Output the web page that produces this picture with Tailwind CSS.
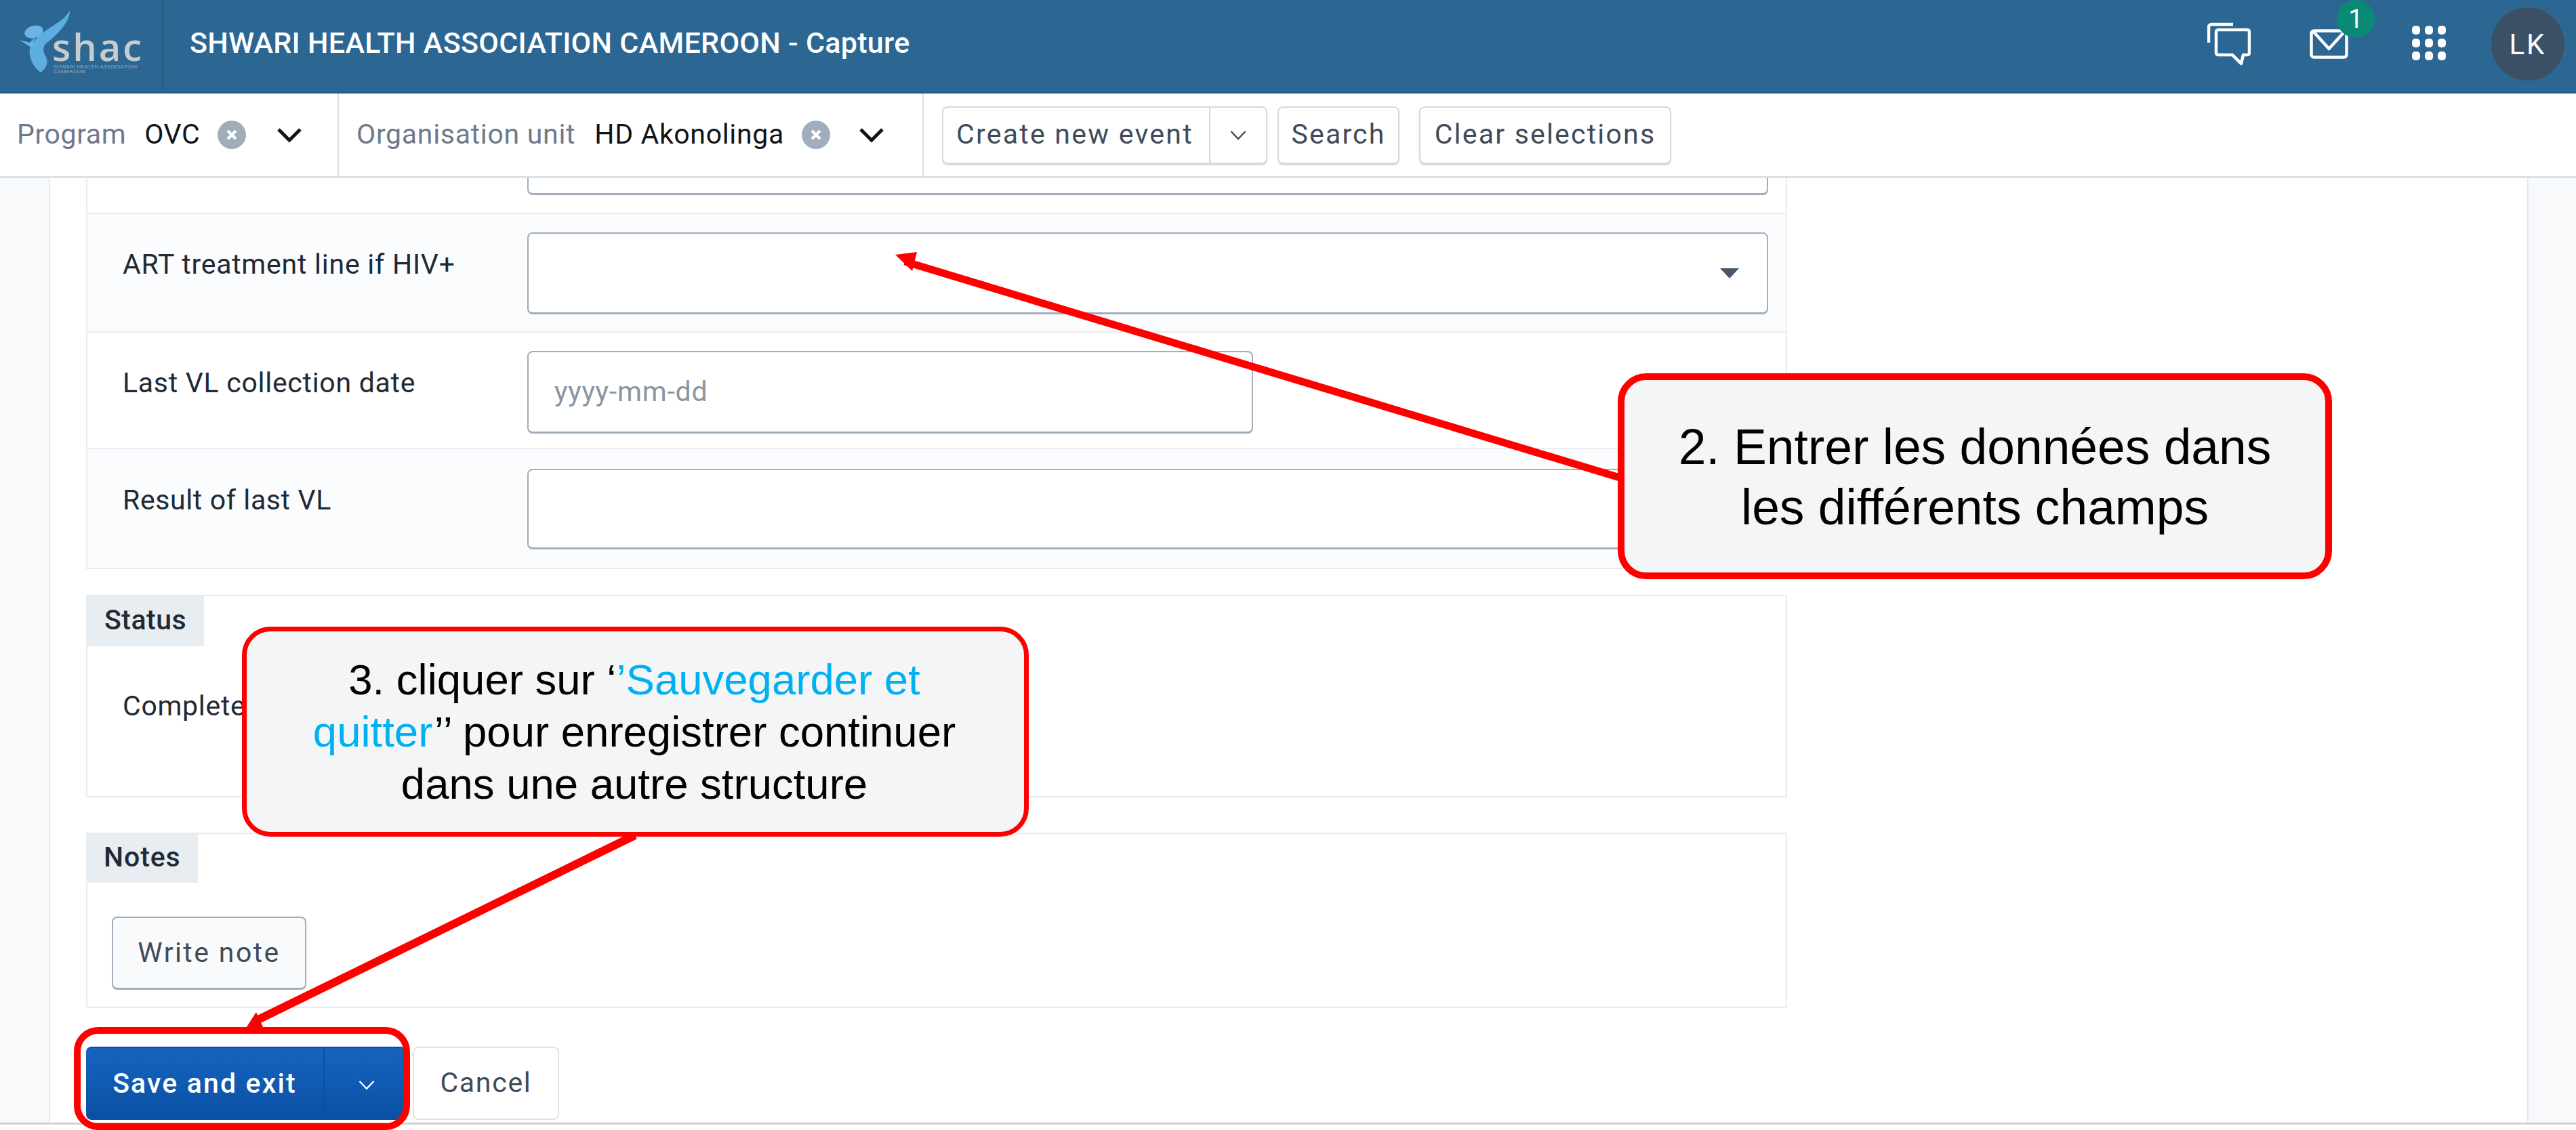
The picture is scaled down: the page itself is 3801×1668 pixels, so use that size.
<!DOCTYPE html>
<html lang="en">

<head>
    <meta charset="UTF-8">
    <meta name="viewport" content="width=device-width, initial-scale=1.0">
    <title>Capture</title>
    <script src="https://cdn.jsdelivr.net/npm/@tailwindcss/browser@4"></script>
</head>

<body>
    <div class="relative w-[3801px] h-[1668px] overflow-hidden bg-white font-[Roboto,sans-serif] text-[41px] text-[#212934]">
        <!-- Header -->
        <header class="flex items-center h-[138px] bg-[#2c6693] border-b-2 border-[#24598a] text-white">
            <div class="relative w-[241px] h-full border-r-2 border-[#285c86] shrink-0">
                <svg class="absolute left-0 top-0" width="110" height="136" viewBox="0 0 110 136">
                    <path d="M103 15C104 32 84 52 68 64C62 70 64 78 68 84C72 92 68 102 60 107C48 98 42 84 44 72C46 62 60 50 72 42C86 33 98 26 103 15Z" fill="#5cade0"/>
                    <ellipse cx="50" cy="47" rx="14" ry="9" transform="rotate(-15 50 47)" fill="#68b5e6"/>
                    <path d="M29 59L44 63L52 54L46 70Z" fill="#68b5e6"/>
                </svg>
                <span class="absolute left-[77px] top-[45px] font-['Open_Sans',sans-serif] font-semibold text-[#c8cccf] text-[56px] tracking-[3px] leading-[46px]">shac</span>
                <span class="absolute left-[79px] top-[95px] text-[8px] leading-[7px] tracking-[0.4px] text-[#8ea8bd] whitespace-nowrap">SHWARI HEALTH ASSOCIATION<br>CAMEROON</span>
            </div>
            <div class="ml-[39px] pb-[10px] font-medium text-[43px] tracking-[0.3px]">SHWARI HEALTH ASSOCIATION CAMEROON - Capture</div>
            <div class="ml-auto flex items-center pr-[17px] pb-[6px]">
                <svg width="64" height="64" viewBox="0 0 64 64" fill="none" stroke="white" stroke-width="4.5" stroke-linejoin="round">
                    <path d="M2 30V7a4 4 0 0 1 4-4h32"/>
                    <path d="M13 14a3 3 0 0 1 3-3h43a3 3 0 0 1 3 3v31a3 3 0 0 1-3 3h-6l-3 13-13-13H16a3 3 0 0 1-3-3Z"/>
                </svg>
                <div class="relative ml-[87px] w-[57px] h-[44px]">
                    <svg width="57" height="44" viewBox="0 0 57 44" fill="none" stroke="white" stroke-width="4.5" stroke-linejoin="round">
                        <rect x="2.5" y="2.5" width="52" height="39" rx="4"/>
                        <path d="M5 3L28.5 29L52 3"/>
                    </svg>
                    <span class="absolute left-[40px] top-[-43px] flex items-center justify-center w-[56px] h-[56px] rounded-full bg-[#0a8a74] text-[38px]">1</span>
                </div>
                <div class="ml-[94px] mb-[4px] grid grid-cols-3 gap-x-[7px] gap-y-[6px]">
                    <i class="block w-[12px] h-[13px] rounded-[5px] bg-white"></i><i class="block w-[12px] h-[13px] rounded-[5px] bg-white"></i><i class="block w-[12px] h-[13px] rounded-[5px] bg-white"></i>
                    <i class="block w-[12px] h-[13px] rounded-[5px] bg-white"></i><i class="block w-[12px] h-[13px] rounded-[5px] bg-white"></i><i class="block w-[12px] h-[13px] rounded-[5px] bg-white"></i>
                    <i class="block w-[12px] h-[13px] rounded-[5px] bg-white"></i><i class="block w-[12px] h-[13px] rounded-[5px] bg-white"></i><i class="block w-[12px] h-[13px] rounded-[5px] bg-white"></i>
                </div>
                <div class="ml-[67px] flex items-center justify-center w-[108px] h-[108px] rounded-full bg-[#3d5166] text-[42px] tracking-[3px]">LK</div>
            </div>
        </header>

        <!-- Toolbar -->
        <div class="flex items-center h-[125px] border-b-[3px] border-[#d9e1e9]">
            <div class="flex items-center w-[500px] h-full pl-[25px] border-r-2 border-[#d5dde5] shrink-0">
                <span class="text-[#6e7a8a] tracking-[0.6px]">Program</span>
                <span class="ml-[27px] text-[#101418] tracking-[0.5px]">OVC</span>
                <svg class="ml-[26px]" width="42" height="42" viewBox="0 0 42 42"><circle cx="21" cy="21" r="21" fill="#a0adba"/><path d="M15 15L27 27M27 15L15 27" stroke="white" stroke-width="4"/></svg>
                <svg class="ml-[46px]" width="36" height="22" viewBox="0 0 36 22" fill="none" stroke="#101418" stroke-width="5"><path d="M2 3L18 19L34 3"/></svg>
            </div>
            <div class="flex items-center w-[863px] h-full pl-[26px] border-r-2 border-[#d5dde5] shrink-0">
                <span class="text-[#6e7a8a] tracking-[0.7px]">Organisation unit</span>
                <span class="ml-[28px] text-[#101418] tracking-[0.65px]">HD Akonolinga</span>
                <svg class="ml-[26px]" width="42" height="42" viewBox="0 0 42 42"><circle cx="21" cy="21" r="21" fill="#a0adba"/><path d="M15 15L27 27M27 15L15 27" stroke="white" stroke-width="4"/></svg>
                <svg class="ml-[43px]" width="36" height="22" viewBox="0 0 36 22" fill="none" stroke="#101418" stroke-width="5"><path d="M2 3L18 19L34 3"/></svg>
            </div>
            <div class="flex items-center pl-[27px]">
                <div class="flex items-center h-[85px] w-[480px] rounded-[8px] border-2 border-[#d5d9e0] shadow-[0_2px_1px_#d5d9e0] text-[#404b5a]">
                    <span class="flex items-center w-[394px] h-full pl-[19px] border-r-2 border-[#d5d9e0] tracking-[2.25px]">Create new event</span>
                    <svg class="ml-[29px]" width="24" height="15" viewBox="0 0 24 15" fill="none" stroke="#404b5a" stroke-width="2.5"><path d="M1.5 2L12 13L22.5 2"/></svg>
                </div>
                <button class="ml-[15px] h-[85px] w-[180px] rounded-[8px] border-2 border-[#d5d9e0] shadow-[0_2px_1px_#d5d9e0] text-[#404b5a] tracking-[2.2px]">Search</button>
                <button class="ml-[29px] h-[85px] w-[372px] rounded-[8px] border-2 border-[#d5d9e0] shadow-[0_2px_1px_#d5d9e0] text-[#404b5a] tracking-[2.2px]">Clear selections</button>
            </div>
        </div>

        <!-- Main -->
        <div class="flex h-[1397px] border-b-[3px] border-[#cdd4d0]">
            <div class="w-[74px] bg-[#f8f9fa] border-r-2 border-[#e3e8ee] shrink-0"></div>
            <main class="w-[3655px] pl-[53px] shrink-0">
                <section class="w-[2510px] border-x-2 border-b-2 border-[#e8ecf1]">
                    <div class="flex h-[53px] border-b-2 border-[#e8ecf1] pl-[649px] pr-[26px]">
                        <div class="w-full h-[25px] rounded-b-[8px] border-2 border-t-0 border-[#a0adba] border-b-[3px]"></div>
                    </div>
                    <div class="flex h-[175px] bg-[#fbfcfd] border-b-2 border-[#e8ecf1] pt-[27px] pl-[52px] pr-[26px]">
                        <label class="w-[597px] pt-[27px] leading-[40px] shrink-0 tracking-[0.75px]">ART treatment line if HIV+</label>
                        <div class="flex items-center justify-end w-full h-[121px] pr-[41px] rounded-[8px] bg-white border-2 border-[#a0adba] border-b-[3px]">
                            <svg width="28" height="15" viewBox="0 0 28 15"><path d="M0 0H28L14 15Z" fill="#4a5768"/></svg>
                        </div>
                    </div>
                    <div class="flex h-[172px] border-b-2 border-[#e8ecf1] pt-[27px] pl-[52px]">
                        <label class="w-[597px] pt-[27px] leading-[40px] shrink-0 tracking-[0.72px]">Last VL collection date</label>
                        <div class="flex items-center w-[1071px] h-[122px] pl-[38px] rounded-[8px] bg-white border-2 border-[#a0adba] border-b-[3px] text-[#8a95a3] tracking-[0.8px]">yyyy-mm-dd</div>
                    </div>
                    <div class="flex h-[175px] bg-[#fbfcfd] pt-[29px] pl-[52px] pr-[26px]">
                        <label class="w-[597px] pt-[26px] leading-[40px] shrink-0 tracking-[0.62px]">Result of last VL</label>
                        <div class="w-full h-[119px] rounded-[8px] bg-white border-2 border-[#a0adba] border-b-[3px]"></div>
                    </div>
                </section>

                <section class="mt-[38px] w-[2510px] h-[299px] border-2 border-[#e8ecf1]">
                    <h3 class="flex items-center w-[174px] h-[76px] -mt-[2px] -ml-[2px] pl-[27px] bg-[#e8edf2] font-medium tracking-[0.5px]">Status</h3>
                    <div class="pl-[52px] pt-[68px] leading-[40px] tracking-[0.7px]">Complete</div>
                </section>

                <section class="mt-[52px] w-[2510px] h-[259px] border-2 border-[#e8ecf1]">
                    <h3 class="flex items-center w-[165px] h-[74px] -mt-[2px] -ml-[2px] pl-[26px] bg-[#e8edf2] font-medium tracking-[0.9px]">Notes</h3>
                    <button class="ml-[36px] mt-[50px] w-[287px] h-[108px] rounded-[8px] bg-[#f9fafb] border-2 border-[#a0adba] border-b-[3px] text-[#404b5a] tracking-[2.4px]">Write note</button>
                </section>

                <div class="flex mt-[57px]">
                    <div class="flex w-[471px] h-[108px] rounded-[8px] text-white bg-linear-to-b from-[#1565c0] to-[#0a4fa3] border-t-2 border-[#0b4aa0] font-medium">
                        <span class="flex items-center justify-center w-[352px] border-r-2 border-[#0d4f9e] tracking-[2.15px]">Save and exit</span>
                        <svg class="ml-[50px] mt-[47px]" width="24" height="15" viewBox="0 0 24 15" fill="none" stroke="white" stroke-width="2.5"><path d="M1.5 2L12 13L22.5 2"/></svg>
                    </div>
                    <button class="ml-[11px] w-[216px] h-[108px] rounded-[8px] border-2 border-[#dfe3e8] text-[#404b5a] tracking-[1.7px]">Cancel</button>
                </div>
            </main>
            <div class="flex-1 bg-[#f8f9fa] border-l-2 border-[#e3e8ee]"></div>
        </div>

        <!-- Annotations -->
        <svg class="absolute inset-0 pointer-events-none" width="3801" height="1668" viewBox="0 0 3801 1668">
            <path d="M2390 705L1335 386" stroke="#ff0000" stroke-width="11" fill="none"/>
            <path d="M1321 376L1353 372L1346 400Z" fill="#ff0000"/>
            <path d="M937 1233L375 1508" stroke="#ff0000" stroke-width="12" fill="none"/>
            <path d="M360 1522L378 1494L388 1516Z" fill="#ff0000"/>
        </svg>
        <div class="absolute left-[2387px] top-[551px] flex items-center justify-center w-[1054px] h-[304px] pt-[4px] rounded-[42px] border-[10px] border-[#ff0000] bg-[#f4f5f7] text-center font-['Liberation_Sans',sans-serif] text-[73.2px] leading-[89px] text-black">
            <span>2. Entrer les données dans<br>les différents champs</span>
        </div>
        <div class="absolute left-[357px] top-[925px] flex items-center justify-center w-[1161px] h-[310px] rounded-[42px] border-[7px] border-[#ff0000] bg-[#f4f5f7] text-center font-['Liberation_Sans',sans-serif] text-[63.5px] leading-[77px] text-black">
            <span class="-ml-[3px]">3. cliquer sur ‘<span class="text-[#00b0f0]">’Sauvegarder et<br>quitter</span>’’ pour enregistrer continuer<br>dans une autre structure</span>
        </div>
        <div class="absolute left-[109px] top-[1516px] w-[496px] h-[152px] rounded-[36px] border-[10px] border-[#ff0000]"></div>
    </div>
</body>

</html>
